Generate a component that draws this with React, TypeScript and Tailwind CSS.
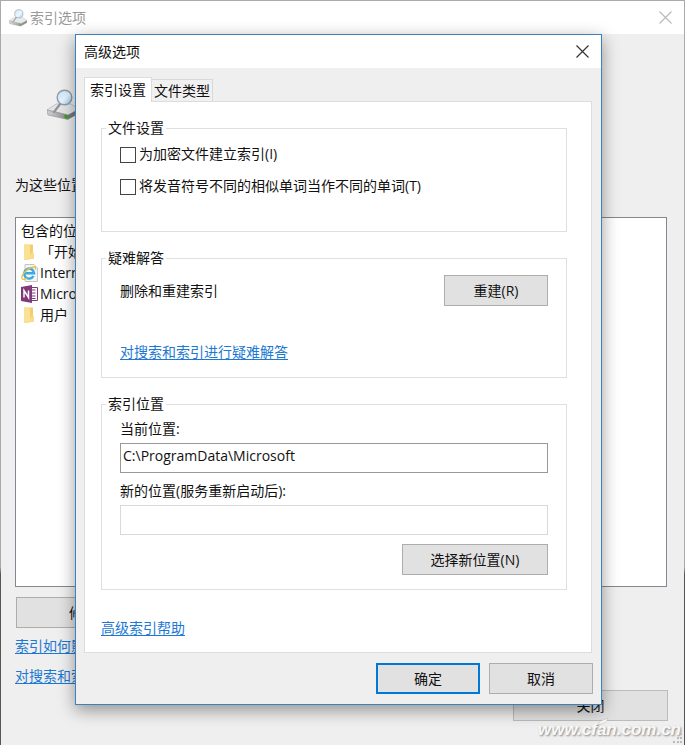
import type { ButtonHTMLAttributes, ReactNode } from 'react';

const LINK = 'text-sm leading-5 text-[#1c78d2] underline underline-offset-2';

const CloseIcon = () => (
  <svg width="13" height="13" viewBox="0 0 13 13" fill="none" stroke="currentColor" strokeWidth="1.2">
    <path d="M.5.5l12 12M12.5.5l-12 12" />
  </svg>
);

const DriveIcon = ({ className }: { className?: string }) => (
  <svg viewBox="0 0 32 32" className={className}>
    <defs>
      <linearGradient id="lens" x1="0" y1="0" x2="1" y2="1">
        <stop offset="0" stopColor="#c3defa" />
        <stop offset=".55" stopColor="#e9f6ff" />
        <stop offset="1" stopColor="#8cc4f2" />
      </linearGradient>
      <linearGradient id="front" x1="0" y1="0" x2="1" y2="0">
        <stop offset="0" stopColor="#d2d2d2" />
        <stop offset="1" stopColor="#85878a" />
      </linearGradient>
    </defs>
    <path d="M0 21l9-6h15l8 5-11 6z" fill="#e4e5e6" stroke="#adb0b3" strokeWidth=".7" />
    <path d="M0 21l21 5v4.500L1 26z" fill="url(#front)" stroke="#8f9193" strokeWidth=".6" />
    <path d="M21 26l11-6v4.500l-11 6z" fill="#77797c" />
    <path d="M17.500 25.500l3 .8v3.500l-3-.8z" fill="#2fa51b" />
    <path d="M13.500 14.500L7 23" stroke="#8d939a" strokeWidth="2.200" strokeLinecap="round" />
    <circle cx="17.500" cy="8.500" r="7.300" fill="url(#lens)" stroke="#8e9cab" strokeWidth="1.400" />
  </svg>
);

const FolderIcon = () => (
  <svg width="18" height="18" viewBox="0 0 18 18">
    <path d="M3 1.500h9V13l1 .5v2l-9 1.500H3z" fill="#f3cf6b" />
    <path d="M3 1.500l6 1V16l-5 1-1-.5z" fill="#fbe196" />
    <path d="M9 12.500l1.500-2.500H13v5.500L7 16.500z" fill="#f8dc88" />
  </svg>
);

const ExplorerIcon = () => (
  <svg width="18" height="18" viewBox="0 0 18 18" fill="none">
    <path d="M4 .5h9l3.500 3.500v13.500H4z" fill="#f4f4f4" stroke="#c4c4c4" />
    <path d="M12.500 12a5 5 0 1 1 .6-2.700H4.500" stroke="#37ace4" strokeWidth="2.400" />
    <path
      d="M1 14.500C0 11 7 3 13.500 3c1 0 1.500 1 .8 2.500M1 14.500c.8 1.500 3 .8 5-.5"
      stroke="#efbf3c"
      strokeWidth="1.300"
    />
  </svg>
);

const OneNoteIcon = () => (
  <svg width="18" height="18" viewBox="0 0 18 18">
    <path d="M9 2.500h7.500v13H9z" fill="#fff" stroke="#80397b" />
    <path d="M11 5h3.500M11 8h3.500M11 11h3.500M11 13.500h3.500" stroke="#80397b" strokeWidth="1.200" />
    <path d="M0 2l11-2v18L0 16z" fill="#80397b" />
    <path d="M3 12.500v-7l4.500 7v-7" fill="none" stroke="#fff" strokeWidth="1.500" />
  </svg>
);

const LOCATIONS = [
  { name: '「开始', icon: <FolderIcon /> },
  { name: 'Internet', icon: <ExplorerIcon /> },
  { name: 'Micros', icon: <OneNoteIcon /> },
  { name: '用户', icon: <FolderIcon /> },
];

const Button = ({ className, ...props }: ButtonHTMLAttributes<HTMLButtonElement>) => (
  <button
    type="button"
    className={`h-[31px] border bg-[#e1e1e1] text-sm leading-5 ${className}`}
    {...props}
  />
);

const Group = ({ title, className, children }: { title: string; className: string; children: ReactNode }) => (
  <fieldset className={`border border-[#dfdfdf] px-[18px] ${className}`}>
    <legend className="-ml-[14px] h-5 px-0.5 text-sm leading-5">{title}</legend>
    {children}
  </fieldset>
);

const CheckOption = ({ children }: { children: ReactNode }) => (
  <label className="flex items-center gap-[3px] text-sm leading-5">
    <input type="checkbox" className="mt-0.5 size-4 appearance-none border border-[#444] bg-white checked:bg-[#0078d7]" />
    {children}
  </label>
);

const IndexingOptions = () => (
  <main className="bg-[linear-gradient(#aaa_0%,#aaa_76%,#555_77%)] p-px">
    <header className="flex h-[33px] items-center bg-white pr-3 pl-2 text-[#999]">
      <DriveIcon className="size-[18px] opacity-80" />
      <h1 className="ml-[3px] flex-1 text-sm">索引选项</h1>
      <button type="button" aria-label="关闭" className="text-[#bbb]">
        <CloseIcon />
      </button>
    </header>
    <div className="flex flex-col bg-[#efefef] pr-4 pb-6 pl-[14px]">
      <DriveIcon className="mt-[55px] ml-8 size-8" />
      <p className="mt-[54px] text-sm leading-5">为这些位置</p>
      <div className="mt-[22px] mr-px h-[370px] border border-[#828790] bg-white pt-0.5 pl-[5px]">
        <h2 className="text-sm leading-[21px]">包含的位</h2>
        <ul>
          {LOCATIONS.map(({ name, icon }) => (
            <li key={name} className="flex h-[21px] items-center gap-px text-sm whitespace-nowrap">
              {icon}
              {name}
            </li>
          ))}
        </ul>
      </div>
      <Button className="mt-[10px] ml-px w-[155px] border-[#adadad]">修改(M)</Button>
      <a href="#how" className={`mt-2 self-start ${LINK}`}>索引如何影响</a>
      <a href="#troubleshoot" className={`mt-[10px] self-start ${LINK}`}>对搜索和索引</a>
      <Button className="mt-1 w-[155px] self-end border-[#bbb]">关闭</Button>
    </div>
  </main>
);

const AdvancedOptions = () => (
  <section
    role="dialog"
    aria-label="高级选项"
    className="absolute top-[34px] right-[83px] left-[75px] border border-[#3c83bd] bg-[#efefef] shadow-[0_5px_16px_rgba(0,0,0,0.4)]"
  >
    <header className="flex h-[33px] items-center bg-white pr-3 pl-2">
      <h2 className="flex-1 text-sm">高级选项</h2>
      <button type="button" aria-label="关闭" className="text-[#333]">
        <CloseIcon />
      </button>
    </header>
    <div className="pt-[9px] pr-[9px] pl-2">
      <div role="tablist" className="flex items-end">
        <button
          type="button"
          role="tab"
          aria-selected="true"
          className="relative -mb-px h-[25px] border border-b-0 border-[#dcdcdc] bg-white px-[5px] text-sm leading-5"
        >
          索引设置
        </button>
        <button
          type="button"
          role="tab"
          aria-selected="false"
          className="h-[22px] border border-b-0 border-l-0 border-[#d9d9d9] bg-[#f0f0f0] px-0.5 text-sm leading-5"
        >
          文件类型
        </button>
      </div>
      <div className="border border-[#dcdcdc] bg-white pt-4 pr-6 pb-[13px] pl-4">
        <Group title="文件设置" className="h-[114px]">
          <div className="mt-1.5 flex flex-col gap-3">
            <CheckOption>为加密文件建立索引(I)</CheckOption>
            <CheckOption>将发音符号不同的相似单词当作不同的单词(T)</CheckOption>
          </div>
        </Group>
        <Group title="疑难解答" className="mt-4 h-[130px]">
          <div className="mt-[7px] flex items-center justify-between">
            <span className="text-sm">删除和重建索引</span>
            <Button className="w-[104px] border-[#adadad]">重建(R)</Button>
          </div>
          <a href="#fix" className={`mt-9 inline-block ${LINK}`}>对搜索和索引进行疑难解答</a>
        </Group>
        <Group title="索引位置" className="mt-4 h-[196px]">
          <label htmlFor="current" className="mt-[5px] block text-sm leading-5">当前位置:</label>
          <input
            id="current"
            readOnly
            defaultValue="C:\ProgramData\Microsoft"
            className="mt-1 block h-[30px] w-full border border-[#999] px-[2px] pb-[6px] text-sm outline-none"
          />
          <label htmlFor="next" className="mt-2 block text-sm leading-5">新的位置(服务重新启动后):</label>
          <input id="next" className="mt-1 block h-[30px] w-full border border-[#d9d9d9] px-1 text-sm outline-none" />
          <div className="mt-[9px] flex justify-end">
            <Button className="w-[146px] border-[#adadad]">选择新位置(N)</Button>
          </div>
        </Group>
        <a href="#help" className={`mt-7 inline-block ${LINK}`}>高级索引帮助</a>
      </div>
    </div>
    <footer className="flex justify-end gap-[9px] px-2 py-[10px]">
      <Button className="w-[104px] border-[#0078d7] outline outline-[#0078d7] -outline-offset-2">确定</Button>
      <Button className="w-[104px] border-[#adadad]">取消</Button>
    </footer>
  </section>
);

const App = () => (
  <div className="relative overflow-hidden font-['Open_Sans','Noto_Sans_CJK_SC',sans-serif] text-[#111]">
    <IndexingOptions />
    <AdvancedOptions />
    <div className="absolute right-1 bottom-1 font-['Liberation_Sans',sans-serif] text-[17px] leading-6 font-bold text-[#f8f8f8] italic [text-shadow:1px_1px_2px_#888]">
      www.cfan.com.cn
    </div>
    <svg className="absolute right-[76px] bottom-5 h-[9px] w-3" viewBox="0 0 12 9">
      <path d="M1 8C2 3 6 4 11 1 10 6 6 6 1 8z" fill="#f8f8f8" stroke="#bbb" strokeWidth=".6" />
    </svg>
    <svg className="absolute right-0.5 bottom-0.5 size-3" viewBox="0 0 12 12" fill="#bbb">
      <path d="M9 1h2v2H9zM6 5h2v2H6zM9 5h2v2H9zM2 9h2v2H2zM6 9h2v2H6zM9 9h2v2H9z" />
    </svg>
  </div>
);

export default App;
